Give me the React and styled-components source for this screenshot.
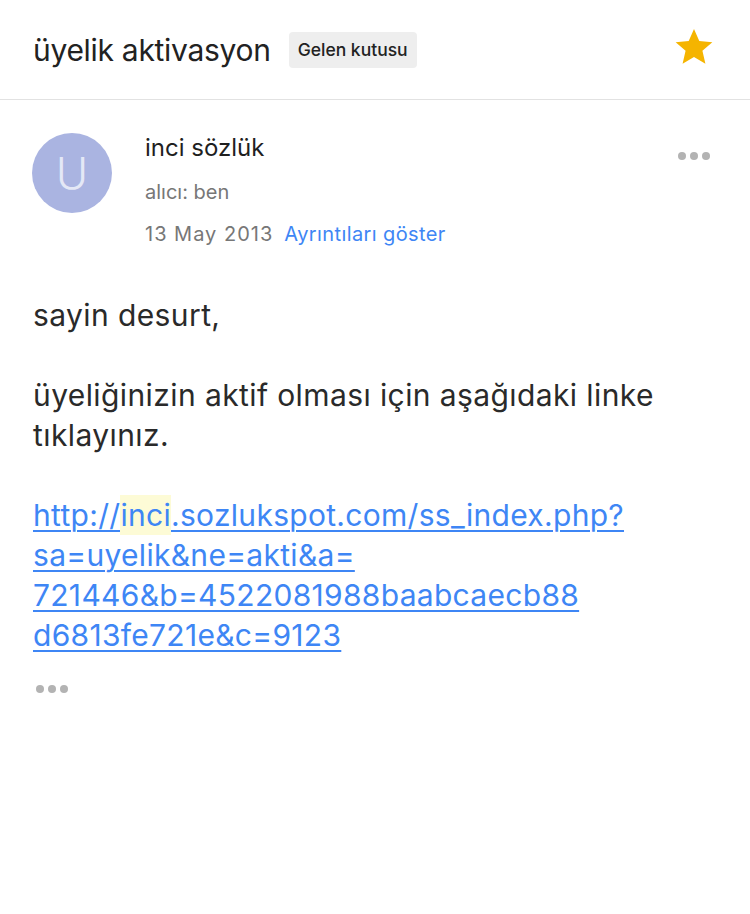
import styled, { createGlobalStyle } from "styled-components";

const GlobalStyle = createGlobalStyle`
  html, body {
    margin: 0;
    padding: 0;
    background: #ffffff;
  }
  body {
    font-family: Inter, "Noto Sans", "Liberation Sans", sans-serif;
    color: #222222;
    -webkit-font-smoothing: antialiased;
  }
`;

const Page = styled.div`
  width: 750px;
  min-height: 914px;
  background: #fff;
`;

const Header = styled.div`
  display: flex;
  align-items: center;
  height: 100px;
  padding: 0 36px 0 33px;
  border-bottom: 1px solid #e2e2e2;
  box-sizing: border-box;
`;

const Subject = styled.h1`
  margin: 0;
  font-size: 30px;
  font-weight: 400;
  letter-spacing: -0.3px;
  color: #222;
`;

const Badge = styled.span`
  margin-left: 18px;
  padding: 0 9px;
  height: 36px;
  display: inline-flex;
  align-items: center;
  background: #eeeeee;
  border-radius: 4px;
  font-size: 17.5px;
  font-weight: 500;
  color: #222;
`;

const StarButton = styled.div`
  margin-left: auto;
  margin-top: -6px;
  display: flex;
  align-items: center;
`;

const Sender = styled.div`
  display: flex;
  padding: 33px 40px 0 32px;
`;

const Avatar = styled.div`
  width: 80px;
  height: 80px;
  border-radius: 50%;
  background: #aab4e1;
  color: #e4e8f6;
  display: flex;
  align-items: center;
  justify-content: center;
  font-size: 44px;
  font-weight: 300;
  flex-shrink: 0;
`;

const Meta = styled.div`
  display: flex;
  flex-direction: column;
  margin-left: 33px;
  flex: 1;
`;

const Name = styled.div`
  font-size: 24px;
  line-height: 30px;
  color: #1f1f1f;
`;

const MetaLine = styled.div`
  font-size: 20px;
  line-height: 26px;
  color: #777;
  margin-top: 16px;
`;

const DateText = styled.span`
  letter-spacing: 1px;
`;

const DetailsLink = styled.span`
  color: #3e86f5;
  margin-left: 11px;
  letter-spacing: 0.4px;
`;

const Dots = styled.div`
  display: flex;
  gap: ${(p) => p.gap}px;
  margin-top: ${(p) => p.top || 0}px;
  margin-left: ${(p) => p.left || 0}px;
  & > span {
    width: ${(p) => p.size}px;
    height: ${(p) => p.size}px;
    border-radius: 50%;
    background: #b3b3b3;
  }
`;

const Body = styled.div`
  padding: 48px 33px 0 33px;
  font-size: 30px;
  line-height: 40px;
  letter-spacing: 0.4px;
  color: #2a2a2a;
`;

const Paragraph = styled.p`
  margin: 0 0 40px 0;
`;

const Link = styled.a`
  color: #3e86f5;
  letter-spacing: 0.3px;
  text-decoration: underline;
  text-underline-offset: 4px;
  text-decoration-thickness: 2px;
  word-break: break-all;
`;

const Mark = styled.span`
  display: inline-block;
  line-height: 40px;
  background: #fdfbd6;
`;

const Star = () => (
  <svg width="40" height="38" viewBox="0 0 24 23">
    <path
      d="M12 0.6l3.2 7.3 7.9.7-6 5.2 1.8 7.8L12 17.5l-6.9 4.1 1.8-7.8-6-5.2 7.9-.7z"
      fill="#f5b400"
    />
  </svg>
);

export default function App() {
  return (
    <Page>
      <GlobalStyle />
      <Header>
        <Subject>üyelik aktivasyon</Subject>
        <Badge>Gelen kutusu</Badge>
        <StarButton>
          <Star />
        </StarButton>
      </Header>

      <Sender>
        <Avatar>U</Avatar>
        <Meta>
          <Name>inci sözlük</Name>
          <MetaLine>alıcı: ben</MetaLine>
          <MetaLine>
            <DateText>13 May 2013</DateText>
            <DetailsLink>Ayrıntıları göster</DetailsLink>
          </MetaLine>
        </Meta>
        <Dots gap={4} size={8} top={19}>
          <span />
          <span />
          <span />
        </Dots>
      </Sender>

      <Body>
        <Paragraph>sayin desurt,</Paragraph>
        <Paragraph>
          üyeliğinizin aktif olması için aşağıdaki linke tıklayınız.
        </Paragraph>
        <Link href="#">
          http://<Mark>inci</Mark>.sozlukspot.com/ss_index.php?
          <br />
          sa=uyelik&amp;ne=akti&amp;a=
          <br />
          721446&amp;b=4522081988baabcaecb88
          <br />
          d6813fe721e&amp;c=9123
        </Link>
        <Dots gap={4} size={8} top={30} left={3}>
          <span />
          <span />
          <span />
        </Dots>
      </Body>
    </Page>
  );
}
